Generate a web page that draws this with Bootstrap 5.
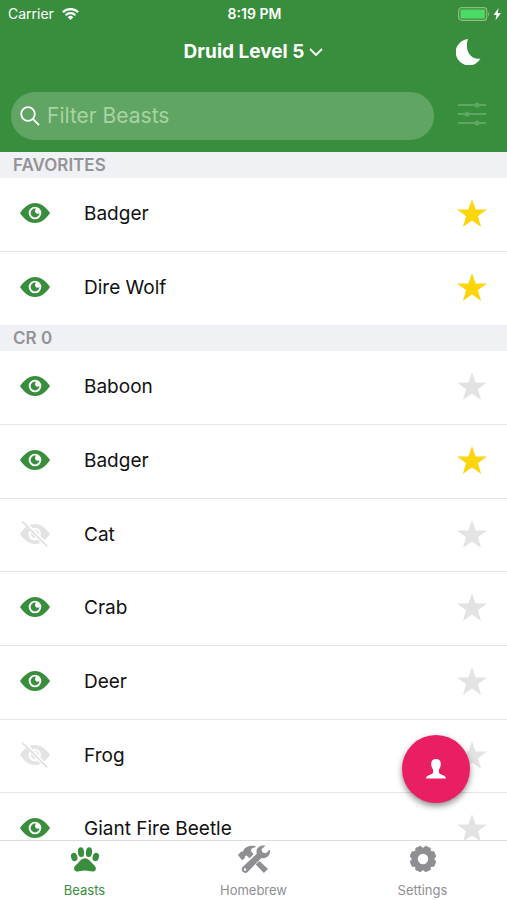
<!DOCTYPE html>
<html lang="en">
<head>
<meta charset="utf-8">
<meta name="viewport" content="width=device-width, initial-scale=1">
<title>Druid Beasts</title>
<link rel="stylesheet" href="https://cdn.jsdelivr.net/npm/bootstrap@5.3.0/dist/css/bootstrap.min.css">
<style>
  :root { --leaf: #388e3c; --idle: #8e8e93; --pale: #e3e3e4; }
  body { font-family: Inter, "Liberation Sans", sans-serif; color: #111; }
  svg { display: block; fill: currentColor; }
  .plain { border: 0; background: none; padding: 0; color: inherit; }
  .app-head { background: var(--leaf); color: #fff; }
  .status { height: 28px; font-size: 14px; line-height: 28px; padding: 0 6px 0 8px; }
  .status > * { flex: 1 1 0; }
  .title-bar { height: 48px; padding: 0 26px; }
  .title-bar > * { flex: 1 1 0; }
  .title-btn { flex: 0 0 auto; font-size: 19px; line-height: 24px; font-weight: 700; gap: 5px; }
  .search-bar { height: 76px; padding: 3px 20px 0 11px; gap: 23px; }
  .search-box { height: 48px; background: #60a564; border-radius: 24px; padding: 0 9px; gap: 7px; }
  .search-box input { outline: 0; font-size: 21px; line-height: 28px; color: #fff; }
  .search-box input::placeholder { color: #a9d3a3; opacity: 1; }
  .filter-btn { color: #60a564; padding-bottom: 3px; }
  .group-title { height: 26px; line-height: 26px; margin: 0; padding: 0 13px; background: #f0f1f5; color: #939396; font-size: 17px; font-weight: 600; }
  .beast { height: 74px; padding: 0 20px; border-bottom: 1px solid #e6e6e8; font-size: 19px; }
  .beast:nth-child(3n) { height: 73px; }
  .favs .beast:last-child { height: 73px; border-bottom: 0; }
  .beast-name { padding-left: 34px; }
  .beast .plain { padding-bottom: 3px; }
  .seen { color: var(--leaf); }
  .hidden-beast { color: var(--pale); }
  .starred { color: #fdd50b; }
  .unstarred { color: var(--pale); }
  .tabs { height: 60px; border-top: 1px solid #dcdcde; background: #fff; }
  .tabs a { color: var(--idle); font-size: 13px; line-height: 18px; padding-top: 4px; gap: 8px; }
  .tabs a.active { color: var(--leaf); }
  .fab { position: absolute; right: 37px; bottom: 97px; width: 68px; height: 68px; background: #e91e63; color: #fff; box-shadow: 0 3px 6px rgba(0,0,0,.45); }
</style>
</head>
<body>
<svg class="d-none" aria-hidden="true">
  <symbol id="eye" viewBox="0 0 30 20"><path fill-rule="evenodd" d="M15 0C8.800 0 4 4.500 0 10c3.500 5.200 8.300 10 15 10s11.500-4.800 15-10C26.500 4.800 21.200 0 15 0zm0 3.700a6.300 6.300 0 1 1 0 12.600 6.300 6.300 0 0 1 0-12.600z"/><path d="M15 5.600a4.400 4.400 0 1 0 4.400 4.400 2.600 2.600 0 0 1-4.400-1.900c0-.9.300-1.800 1-2.400z"/></symbol>
  <symbol id="eye-off" viewBox="0 0 30 26"><path d="M1.500 1.300 3 0l25 24.700-1.500 1.300z"/><path d="M9.500 3.800C11.200 3.200 13 3 15 3c6.200 0 11.500 4.800 15 10-1.600 2.400-3.400 4.500-5.600 6.200l-4-4a6 6 0 0 0-7.700-7.900z"/><path d="M14.600 8.800a4.400 4.400 0 0 1 4.700 4.600z"/><path d="M6 5.700C3.800 7.500 1.800 10 0 13c3.500 5.200 8.300 10 15 10 2.200 0 4.200-.5 6-1.300L17.500 18.700A6.300 6.300 0 0 1 9.200 10.200L10 9.700z"/><path d="M11 11.500a4.400 4.400 0 0 0 5 5.600z"/></symbol>
  <symbol id="star" viewBox="0 0 30 28"><path d="M15 0l3.600 10.500H30l-9.100 6.700L24.200 28 15 21.500 5.800 28l3.300-10.800L0 10.500h11.400z"/></symbol>
</svg>
<div class="vh-100 d-flex flex-column overflow-hidden position-relative bg-white">
  <header class="app-head flex-shrink-0">
    <div class="status d-flex align-items-center">
      <div class="d-flex align-items-center gap-2"><span>Carrier</span>
        <svg width="17" height="12" viewBox="0 0 17 12" aria-label="Wi-Fi"><g fill="none" stroke="#fff" stroke-width="2.300"><path d="M.8 4.300a11 11 0 0 1 15.400 0M3.600 7.200a7 7 0 0 1 9.800 0"/></g><path d="M8.500 12 5.700 9.200a4 4 0 0 1 5.600 0z"/></svg></div>
      <div class="text-center fw-semibold">8:19 PM</div>
      <div class="d-flex justify-content-end"><svg width="43" height="14" viewBox="0 0 43 14" aria-label="Battery charging"><rect x=".7" y=".7" width="28" height="12.600" rx="3" fill="none" stroke="#91bd82" stroke-width="1.200"/><rect x="2.500" y="2.500" width="24.400" height="9" rx="1" fill="#4cd964"/><path d="M30 5q2 2 0 4z" fill="#91bd82"/><path d="M40.500 1 35.500 8h3l-1 5.300L43 6h-3.200z"/></svg></div>
    </div>
    <div class="title-bar d-flex align-items-center">
      <span></span>
      <button type="button" class="plain title-btn d-flex align-items-center">Druid Level 5
        <svg width="14" height="9" viewBox="0 0 14 9" aria-hidden="true"><path d="M1 1l6 6 6-6" fill="none" stroke="#fff" stroke-width="1.800"/></svg></button>
      <div class="d-flex justify-content-end"><button type="button" class="plain" aria-label="Night mode"><svg width="25" height="26" viewBox="0 0 25 26"><path d="M12 0A13.200 13.200 0 1 0 24.500 19.500C15 21.500 8 11.500 12 0z"/></svg></button></div>
    </div>
    <div class="search-bar d-flex align-items-center">
      <label class="search-box d-flex align-items-center flex-fill">
        <svg class="flex-shrink-0" width="20" height="20" viewBox="0 0 20 20" aria-hidden="true"><g fill="none" stroke="#fff" stroke-width="1.800"><circle cx="8" cy="8" r="6.800"/><path d="M12.800 12.800 19 19"/></g></svg>
        <input type="search" class="plain w-100" placeholder="Filter Beasts" aria-label="Filter Beasts">
      </label>
      <button type="button" class="plain filter-btn" aria-label="Filters"><svg width="30" height="24" viewBox="0 0 30 24"><path d="M1 3h28M1 12h28M1 21h28" stroke="currentColor" stroke-width="1.800"/><circle cx="20" cy="3" r="2.600"/><circle cx="10" cy="12" r="2.600"/><circle cx="20" cy="21" r="2.600"/></svg></button>
    </div>
  </header>
  <main class="flex-fill overflow-hidden">
    <h2 class="group-title">FAVORITES</h2>
    <ul class="favs list-unstyled m-0" id="favs"></ul>
    <h2 class="group-title">CR 0</h2>
    <ul class="list-unstyled m-0" id="cr0"></ul>
  </main>
  <button type="button" class="fab plain rounded-circle d-flex align-items-center justify-content-center" aria-label="Character"><svg width="20" height="20" viewBox="0 0 20 20"><path d="M10 0c3.200 0 5 2 4.800 5-.1 2.500-.9 4.200-1.900 5.700v2.500c0 2.800 7.100 2.300 7.100 6.300H0c0-4 7.100-3.500 7.100-6.300v-2.500C6.100 9.200 5.300 7.500 5.200 5 5 2 6.800 0 10 0z"/></svg></button>
  <nav class="tabs d-flex flex-shrink-0" aria-label="Main">
    <a href="#beasts" class="active col-4 d-flex flex-column align-items-center text-decoration-none">
      <svg width="30" height="28" viewBox="0 0 30 28" aria-hidden="true"><ellipse cx="4.200" cy="12" rx="3.100" ry="4.200" transform="rotate(-18 4.200 12)"/><ellipse cx="11" cy="7.200" rx="3.100" ry="4.900" transform="rotate(-6 11 7.200)"/><ellipse cx="19" cy="7.200" rx="3.100" ry="4.900" transform="rotate(6 19 7.200)"/><ellipse cx="25.800" cy="12" rx="3.100" ry="4.200" transform="rotate(18 25.800 12)"/><path d="M15 13.200c3.200 0 4.800 2.300 6.400 4.300 2 2.200 4.800 3.700 4.500 6.500-.4 3.200-4.600 2.700-6.700 2-2.600-.8-5.800-.8-8.400 0-2.100.7-6.300 1.200-6.700-2-.3-2.800 2.500-4.300 4.500-6.500 1.600-2 3.200-4.300 6.400-4.300z"/></svg>
      <span>Beasts</span></a>
    <a href="#homebrew" class="col-4 d-flex flex-column align-items-center text-decoration-none">
      <svg width="32" height="28" viewBox="0 0 32 28" aria-hidden="true"><path d="M0 10 3.200 6.500l1.600.3C6.200 2.500 10.500-.3 17.500 1v1.200c-3.200.3-4.700 1.700-4.500 3.800l2.500 3.200-4 4L8.500 10.500l-1.700.6.300 1.700-3 2.500z"/><path d="M21.500 16 30 24l-4.200 4-8-8.500z"/><path fill-rule="evenodd" d="M27.500.8c-5.500-1.500-10.300 2.500-8.700 7.900L4.600 22c-3 3.300 1.800 8 5 5L23.400 13c5.400 1.300 9.900-3.500 8.300-8.600L28 8.300l-3.600-.9-.9-3.200zM7 23.300a1.300 1.300 0 1 1 0 2.600 1.300 1.300 0 0 1 0-2.600z"/></svg>
      <span>Homebrew</span></a>
    <a href="#settings" class="col-4 d-flex flex-column align-items-center text-decoration-none">
      <svg width="28" height="28" viewBox="-14 -14 28 28" aria-hidden="true"><circle r="8.200" fill="none" stroke="currentColor" stroke-width="6"/><g id="teeth"><path id="tooth" d="M-4.300-9.800-2.800-13.200h5.600L4.300-9.800z" transform="rotate(22.500)"/><use href="#tooth" transform="rotate(90)"/><use href="#tooth" transform="rotate(180)"/><use href="#tooth" transform="rotate(270)"/></g><use href="#teeth" transform="rotate(45)"/></svg>
      <span>Settings</span></a>
  </nav>
</div>
<script src="https://cdn.jsdelivr.net/npm/bootstrap@5.3.0/dist/js/bootstrap.bundle.min.js"></script>
<script>
  const row = ([name, seen, fav]) => `
    <li class="beast d-flex align-items-center">
      <button type="button" class="plain ${seen ? 'seen' : 'hidden-beast'}" aria-label="Toggle ${name} visibility">
        <svg width="30" height="26"><use href="#${seen ? 'eye' : 'eye-off'}" width="30" height="${seen ? 20 : 26}" y="${seen ? 3 : 0}"/></svg>
      </button>
      <span class="beast-name flex-fill">${name}</span>
      <button type="button" class="plain ${fav ? 'starred' : 'unstarred'}" aria-label="Favorite ${name}"><svg width="30" height="28"><use href="#star" width="30" height="28"/></svg></button>
    </li>`;
  document.getElementById('favs').innerHTML = [['Badger', 1, 1], ['Dire Wolf', 1, 1]].map(row).join('');
  document.getElementById('cr0').innerHTML = [['Baboon', 1, 0], ['Badger', 1, 1], ['Cat', 0, 0], ['Crab', 1, 0], ['Deer', 1, 0], ['Frog', 0, 0], ['Giant Fire Beetle', 1, 0]].map(row).join('');
</script>
</body>
</html>
